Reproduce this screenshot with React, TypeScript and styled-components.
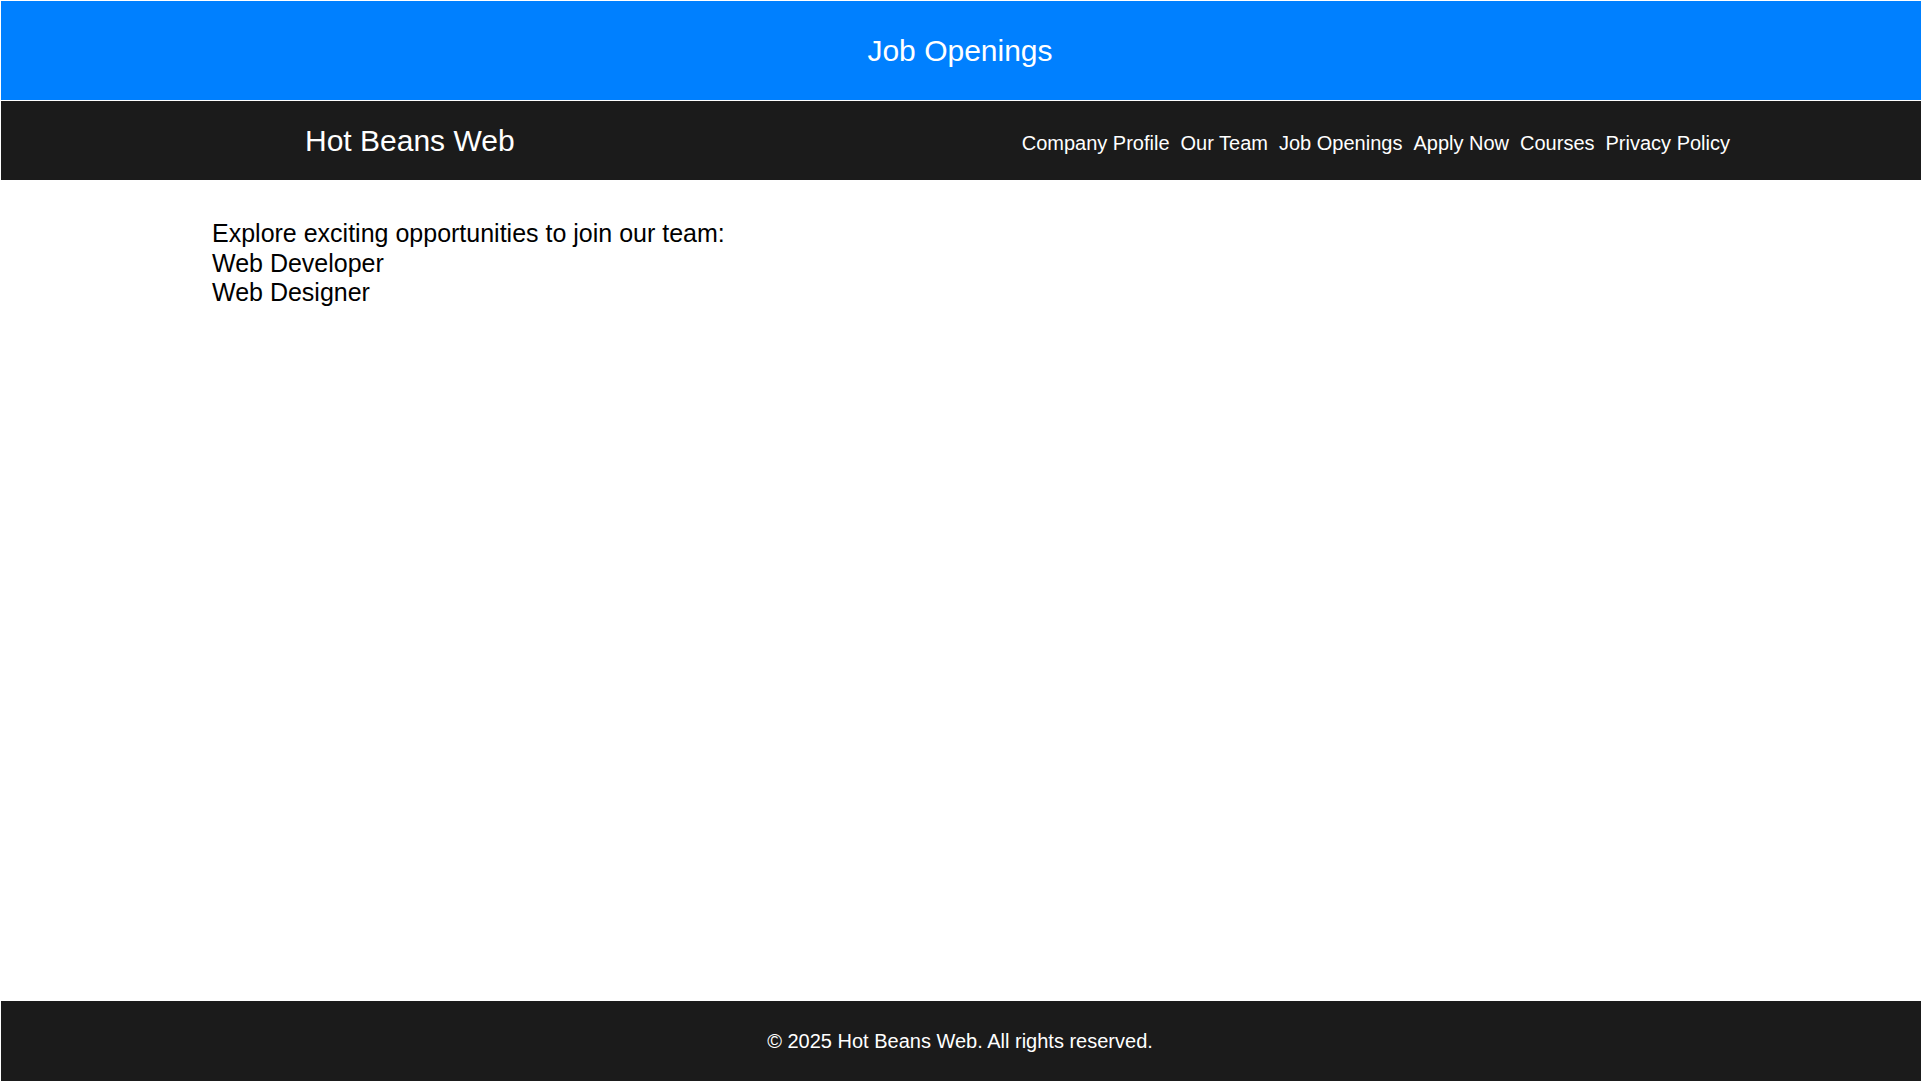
import styled, { createGlobalStyle } from 'styled-components';

const GlobalStyle = createGlobalStyle`
  * {
    box-sizing: border-box;
  }
  html, body {
    margin: 0;
  }
  body {
    padding: 1px 0 0 1px;
    font-family: "Liberation Sans", Arial, sans-serif;
    background: #fff;
    color: #000;
  }
`;

const Page = styled.div`
  display: flex;
  flex-direction: column;
  min-height: calc(100vh - 1px);
`;

const Banner = styled.header`
  height: 99px;
  background: #0080ff;
  display: flex;
  align-items: center;
  justify-content: center;
  padding-right: 2px;
  margin-bottom: 1px;
`;

const Title = styled.h1`
  margin: 0;
  font-size: 30px;
  font-weight: normal;
  color: #fff;
`;

const NavBar = styled.nav`
  height: 79px;
  background: #1b1b1b;
  display: flex;
  align-items: center;
  justify-content: space-between;
  padding: 0 191px 0 304px;
`;

const Logo = styled.div`
  font-size: 30px;
  color: #fff;
`;

const Links = styled.ul`
  display: flex;
  gap: 11px;
  list-style: none;
  margin: 5px 0 0;
  padding: 0;
`;

const NavLink = styled.a`
  color: #fff;
  font-size: 20px;
  text-decoration: none;
`;

const Main = styled.main`
  flex: 1;
  padding: 39px 211px;
  font-size: 25px;
`;

const Line = styled.div`
  line-height: 29.7px;
`;

const Footer = styled.footer`
  height: 80px;
  background: #1b1b1b;
  color: #fff;
  font-size: 20px;
  display: flex;
  align-items: center;
  justify-content: center;
  padding-right: 2px;
`;

const navItems = ['Company Profile', 'Our Team', 'Job Openings', 'Apply Now', 'Courses', 'Privacy Policy'];
const jobs = ['Web Developer', 'Web Designer'];

export default function App() {
  return (
    <>
      <GlobalStyle />
      <Page>
        <Banner>
          <Title>Job Openings</Title>
        </Banner>
        <NavBar>
          <Logo>Hot Beans Web</Logo>
          <Links>
            {navItems.map(item => (
              <li key={item}>
                <NavLink href="#">{item}</NavLink>
              </li>
            ))}
          </Links>
        </NavBar>
        <Main>
          <Line>Explore exciting opportunities to join our team:</Line>
          {jobs.map(job => (
            <Line key={job}>{job}</Line>
          ))}
        </Main>
        <Footer>© 2025 Hot Beans Web. All rights reserved.</Footer>
      </Page>
    </>
  );
}
